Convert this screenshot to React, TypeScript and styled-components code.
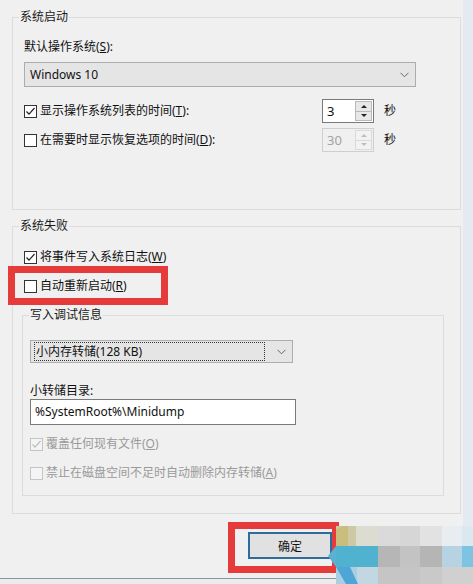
import React from "react";
import styled, { createGlobalStyle } from "styled-components";

const GlobalStyle = createGlobalStyle`
  html, body {
    margin: 0;
    padding: 0;
    background: #f0f0f0;
  }
  body {
    font-family: "Noto Sans", "Noto Sans CJK SC", sans-serif;
    font-size: 12px;
    color: #000;
  }
`;

const Screen = styled.div`
  position: relative;
  width: 473px;
  height: 584px;
  overflow: hidden;
  display: flex;
  flex-direction: column;
  background: #f0f0f0;
`;

const Window = styled.div`
  display: flex;
  height: 578px;
`;

const Dialog = styled.div`
  width: 463px;
  padding-left: 12px;
  box-sizing: border-box;
`;

const FrameEdge = styled.div`
  flex: 1;
  background: #e3eaf2;
`;

const BottomEdge = styled.div`
  height: 1px;
  background: #8195ab;
`;

const BottomShade = styled.div`
  flex: 1;
  background: #ececec;
`;

const Group = styled.fieldset<{ $w: number; $top: number }>`
  margin: ${(p) => p.$top}px 0 0 0;
  padding: 0;
  width: ${(p) => p.$w}px;
  box-sizing: border-box;
  min-width: 0;
  border: 1px solid #dcdcdc;
`;

const Legend = styled.legend`
  margin-left: 6px;
  padding: 0 1px;
  line-height: 16px;
  color: #1a1a1a;
`;

const GroupBody = styled.div<{ $pad: string }>`
  display: flex;
  flex-direction: column;
  align-items: flex-start;
  padding: ${(p) => p.$pad};
`;

const Label = styled.div<{ $mt?: number }>`
  line-height: 16px;
  margin-top: ${(p) => p.$mt ?? 0}px;
  color: #111;
`;

const Combo = styled.div<{ $w: number; $h: number; $mt: number }>`
  display: flex;
  align-items: center;
  justify-content: space-between;
  width: ${(p) => p.$w}px;
  height: ${(p) => p.$h}px;
  margin-top: ${(p) => p.$mt}px;
  box-sizing: border-box;
  border: 1px solid #adadad;
  background: #e5e5e5;
  padding: 0 6px 0 3px;
  color: #111;
`;

const ComboText = styled.span<{ $focus?: boolean }>`
  flex: 1;
  line-height: 17px;
  padding-left: 1px;
  margin-right: 12px;
  border: 1px dotted ${(p) => (p.$focus ? "#333" : "transparent")};
`;

const SpinRow = styled.div<{ $mt: number }>`
  display: grid;
  grid-template-columns: 288px 52px auto;
  column-gap: 10px;
  align-items: center;
  margin-top: ${(p) => p.$mt}px;
`;

const Spin = styled.div<{ $disabled?: boolean }>`
  display: flex;
  height: 24px;
  box-sizing: border-box;
  border: 1px solid ${(p) => (p.$disabled ? "#cfcfcf" : "#7a7a7a")};
  background: ${(p) => (p.$disabled ? "#f0f0f0" : "#fff")};
  color: ${(p) => (p.$disabled ? "#a3a3a3" : "#111")};
`;

const SpinValue = styled.span`
  flex: 1;
  padding: 2px 0 0 4px;
  font-size: 13px;
  line-height: 18px;
`;

const SpinButtons = styled.div<{ $disabled?: boolean }>`
  display: flex;
  flex-direction: column;
  width: 15px;
  margin: 1px 1px 1px 0;
  border: 1px solid ${(p) => (p.$disabled ? "#dadada" : "#b9b9b9")};
  background: ${(p) => (p.$disabled ? "#f2f2f2" : "#e8e8e8")};
`;

const SpinArrow = styled.div<{ $down?: boolean; $disabled?: boolean }>`
  flex: 1;
  display: flex;
  align-items: center;
  justify-content: center;
  border-top: ${(p) => (p.$down ? `1px solid ${p.$disabled ? "#dadada" : "#b9b9b9"}` : "none")};
  &::after {
    content: "";
    border-left: 3px solid transparent;
    border-right: 3px solid transparent;
    ${(p) =>
      p.$down
        ? `border-top: 3px solid ${p.$disabled ? "#bdbdbd" : "#222"};`
        : `border-bottom: 3px solid ${p.$disabled ? "#bdbdbd" : "#222"};`}
  }
`;

const Unit = styled.span`
  line-height: 16px;
  color: #111;
`;

const CheckRow = styled.label<{ $mt?: number; $ml?: number; $disabled?: boolean }>`
  display: flex;
  align-items: center;
  gap: 3px;
  line-height: 16px;
  margin-top: ${(p) => p.$mt ?? 0}px;
  margin-left: ${(p) => p.$ml ?? 0}px;
  color: ${(p) => (p.$disabled ? "#9a9a9a" : "#111")};
`;

const Box = styled.span<{ $disabled?: boolean }>`
  display: inline-flex;
  width: 13px;
  height: 13px;
  box-sizing: border-box;
  border: 1px solid ${(p) => (p.$disabled ? "#c4c4c4" : "#333")};
  background: ${(p) => (p.$disabled ? "#f4f4f4" : "#fff")};
`;

const TextInput = styled.div`
  width: 266px;
  height: 26px;
  box-sizing: border-box;
  border: 1px solid #7a7a7a;
  background: #fff;
  padding: 0 4px;
  line-height: 24px;
  color: #111;
`;

const Footer = styled.div`
  display: flex;
  padding: 18px 0 0 236px;
`;

const Button = styled.div`
  width: 84px;
  height: 27px;
  box-sizing: border-box;
  border: 2px solid #2d6c9c;
  background: #e1e1e1;
  display: flex;
  align-items: center;
  justify-content: center;
  color: #111;
`;

const Highlight = styled.div<{ $x: number; $y: number; $w: number; $h: number }>`
  position: absolute;
  left: ${(p) => p.$x}px;
  top: ${(p) => p.$y}px;
  width: ${(p) => p.$w}px;
  height: ${(p) => p.$h}px;
  box-sizing: border-box;
  border: 7px solid #e63b3b;
  pointer-events: none;
`;

const Mosaic = styled.svg`
  position: absolute;
  left: 328px;
  top: 522px;
`;

const Check = ({ checked, disabled }: { checked?: boolean; disabled?: boolean }) => (
  <Box $disabled={disabled}>
    {checked && (
      <svg width="11" height="11" viewBox="0 0 11 11">
        <polyline
          points="1.5,5.5 4,8.2 9.5,2"
          fill="none"
          stroke={disabled ? "#bdbdbd" : "#222"}
          strokeWidth="1.2"
        />
      </svg>
    )}
  </Box>
);

const Chevron = () => (
  <svg width="9" height="6" viewBox="0 0 9 6">
    <polyline points="0.5,0.8 4.5,4.8 8.5,0.8" fill="none" stroke="#666" strokeWidth="1" />
  </svg>
);

const SpinBox = ({ value, disabled }: { value: string; disabled?: boolean }) => (
  <Spin $disabled={disabled}>
    <SpinValue>{value}</SpinValue>
    <SpinButtons $disabled={disabled}>
      <SpinArrow $disabled={disabled} />
      <SpinArrow $down $disabled={disabled} />
    </SpinButtons>
  </Spin>
);

const mosaicCells: [number, number, number, number, string][] = [
  [8, 4, 20, 20, "#cdc9a4"],
  [28, 4, 22, 20, "#dcdcd0"],
  [50, 4, 22, 20, "#dadada"],
  [72, 4, 20, 20, "#d6d6d6"],
  [92, 4, 22, 20, "#e2e2e2"],
  [114, 4, 20, 20, "#e7edf0"],
  [134, 4, 11, 20, "#dae8ef"],
  [8, 24, 42, 21, "#51b2cf"],
  [50, 24, 22, 21, "#b6b6b6"],
  [72, 24, 20, 21, "#c3c3c3"],
  [92, 24, 22, 21, "#b5b5b5"],
  [114, 24, 20, 21, "#b5d3e3"],
  [134, 24, 11, 21, "#7dc3e2"],
  [8, 45, 21, 17, "#a9cfe3"],
  [29, 45, 21, 17, "#c2d7e2"],
  [50, 45, 42, 17, "#c5c5c5"],
  [92, 45, 22, 17, "#c9c9c9"],
  [114, 45, 31, 17, "#d0d0d0"],
];

export default function App() {
  return (
    <>
      <GlobalStyle />
      <Screen>
        <Window>
          <Dialog>
            <Group $w={449} $top={9}>
              <Legend>系统启动</Legend>
              <GroupBody $pad="14px 0 57px 11px">
                <Label>
                  默认操作系统(<u>S</u>):
                </Label>
                <Combo $w={392} $h={25} $mt={7}>
                  <ComboText>Windows 10</ComboText>
                  <Chevron />
                </Combo>
                <SpinRow $mt={12}>
                  <CheckRow>
                    <Check checked />
                    <span>显示操作系统列表的时间(<u>T</u>):</span>
                  </CheckRow>
                  <SpinBox value="3" />
                  <Unit>秒</Unit>
                </SpinRow>
                <SpinRow $mt={5}>
                  <CheckRow>
                    <Check />
                    <span>在需要时显示恢复选项的时间(<u>D</u>):</span>
                  </CheckRow>
                  <SpinBox value="30" disabled />
                  <Unit>秒</Unit>
                </SpinRow>
              </GroupBody>
            </Group>

            <Group $w={449} $top={8}>
              <Legend>系统失败</Legend>
              <GroupBody $pad="15px 0 17px 9px">
                <CheckRow $ml={2}>
                  <Check checked />
                  <span>将事件写入系统日志(<u>W</u>)</span>
                </CheckRow>
                <CheckRow $ml={2} $mt={13}>
                  <Check />
                  <span>自动重新启动(<u>R</u>)</span>
                </CheckRow>
                <Group $w={422} $top={13}>
                  <Legend>写入调试信息</Legend>
                  <GroupBody $pad="17px 0 14px 7px">
                    <Combo $w={263} $h={23} $mt={0}>
                      <ComboText $focus>小内存转储(128 KB)</ComboText>
                      <Chevron />
                    </Combo>
                    <Label $mt={20}>小转储目录:</Label>
                    <TextInput>%SystemRoot%\Minidump</TextInput>
                    <CheckRow $mt={11} $disabled>
                      <Check checked disabled />
                      <span>覆盖任何现有文件(<u>O</u>)</span>
                    </CheckRow>
                    <CheckRow $mt={13} $disabled>
                      <Check disabled />
                      <span>禁止在磁盘空间不足时自动删除内存转储(<u>A</u>)</span>
                    </CheckRow>
                  </GroupBody>
                </Group>
              </GroupBody>
            </Group>

            <Footer>
              <Button>确定</Button>
            </Footer>
          </Dialog>
          <FrameEdge />
        </Window>
        <BottomEdge />
        <BottomShade />

        <Highlight $x={8} $y={266} $w={160} $h={39} />
        <Highlight $x={228} $y={522} $w={111} $h={51} />

        <Mosaic width="145" height="62" viewBox="0 0 145 62">
          {mosaicCells.map(([x, y, w, h, c], i) => (
            <rect key={i} x={x} y={y} width={w} height={h} fill={c} />
          ))}
          <polygon points="8,8 14,4 20,4 20,24 8,24" fill="#c7b96b" opacity="0.7" />
          <polygon points="0,34 8,24 8,45" fill="#5bb0d4" />
          <polygon points="8,45 22,45 30,62 18,62" fill="#4da6d6" />
        </Mosaic>
      </Screen>
    </>
  );
}
